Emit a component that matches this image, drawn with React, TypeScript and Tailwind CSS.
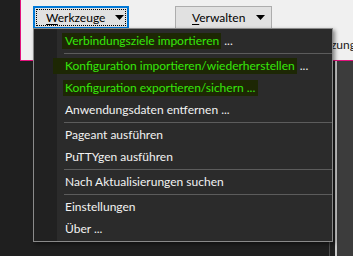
import React from 'react';

const FONT = "font-['Segoe_UI','Lato','Liberation_Sans',sans-serif]";

const Caret = () => (
  <svg width="9" height="5" viewBox="0 0 9 5" className="shrink-0">
    <path d="M0 0H9L4.5 5Z" fill="#000" />
  </svg>
);

type TItem =
  | { kind: 'sep' }
  | { kind: 'item'; label: string; hl?: 'a' | 'b' | 'c'; rest?: string };

const items: TItem[] = [
  { kind: 'item', label: 'Verbindungsziele importieren', hl: 'a', rest: ' ...' },
  { kind: 'sep' },
  { kind: 'item', label: 'Konfiguration importieren/wiederherstellen', hl: 'b', rest: ' ...' },
  { kind: 'item', label: 'Konfiguration exportieren/sichern ...', hl: 'c' },
  { kind: 'item', label: 'Anwendungsdaten entfernen ...' },
  { kind: 'sep' },
  { kind: 'item', label: 'Pageant ausführen' },
  { kind: 'item', label: 'PuTTYgen ausführen' },
  { kind: 'sep' },
  { kind: 'item', label: 'Nach Aktualisierungen suchen' },
  { kind: 'sep' },
  { kind: 'item', label: 'Einstellungen' },
  { kind: 'item', label: 'Über ...' },
];

const hlClass = {
  a: 'bg-[#1d2704] -ml-[3px] pl-[3px] pr-[2px]',
  b: 'bg-[#1d2704] -ml-[12px] pl-[12px] pr-[2px]',
  c: 'bg-[#1d2704] -ml-[2px] pl-[2px] pr-[3px]',
};

const Menu = () => (
  <div className="absolute left-[33px] top-[28px] flex h-[214px] w-[300px] border border-[#8a8a8a] bg-[#2b2b2b] shadow-[2px_2px_4px_rgba(0,0,0,0.45)]">
    {/* icon gutter */}
    <div className="w-[23px] shrink-0 bg-[#212121]" />
    <div className="flex flex-1 flex-col pt-[1px]">
      {items.map((it, i) =>
        it.kind === 'sep' ? (
          <div key={i} className="flex h-[3px] items-center pl-[7px]">
            <div className="h-px w-full bg-[#5c5c5c]" />
          </div>
        ) : (
          <div key={i} className="flex h-[22px] items-center whitespace-pre pl-[8px] text-[12px] leading-[16px]">
            {it.hl ? (
              <>
                <span className={`${hlClass[it.hl]} text-[#36e80a]`}>{it.label}</span>
                {it.rest && <span className="text-[#f2f2f2]">{it.rest}</span>}
              </>
            ) : (
              <span className="text-[#f2f2f2]">{it.label}</span>
            )}
          </div>
        )
      )}
    </div>
  </div>
);

export default function App() {
  return (
    <div className={`relative h-[256px] w-[353px] overflow-hidden bg-[#1f1f1f] ${FONT}`}>
      {/* Top panel */}
      <div className="ml-[20px] flex h-[61px] flex-col border-b border-l border-[#e3127e] bg-[#f0f0f0] pt-[6px]">
        <div className="flex items-start pl-[12px] text-[12px] text-black">
          <div className="flex h-[23px] w-[96px] border-2 border-[#0078d7] bg-[#e1e1e1] p-px">
            <div className="flex flex-1 items-center justify-between border border-dotted border-black pl-[9px] pr-[1px]">
              <span>
                <span className="underline underline-offset-2">W</span>erkzeuge
              </span>
              <Caret />
            </div>
          </div>
          <div className="ml-[46px] flex h-[23px] w-[97px] items-center justify-between border border-[#adadad] bg-[#e1e1e1] pl-[16px] pr-[6px]">
            <span>
              <span className="underline underline-offset-2">V</span>erwalten
            </span>
            <Caret />
          </div>
        </div>
        <div className="-mr-[3px] mt-[8px] flex justify-end whitespace-nowrap text-[12px] leading-[16px] text-[#1a1a1a]">
          Unterstützung
        </div>
      </div>
      {/* Lower area */}
      <div className="flex h-[195px]">
        <div className="w-[330px] shrink-0 border-r border-[#4d4d4d]" />
        <div className="w-[5px] shrink-0" />
        <div className="w-[2px] shrink-0 bg-[#c9c9c9]" />
        <div className="flex-1 bg-[#3c3c3c]" />
      </div>
      <Menu />
    </div>
  );
}
